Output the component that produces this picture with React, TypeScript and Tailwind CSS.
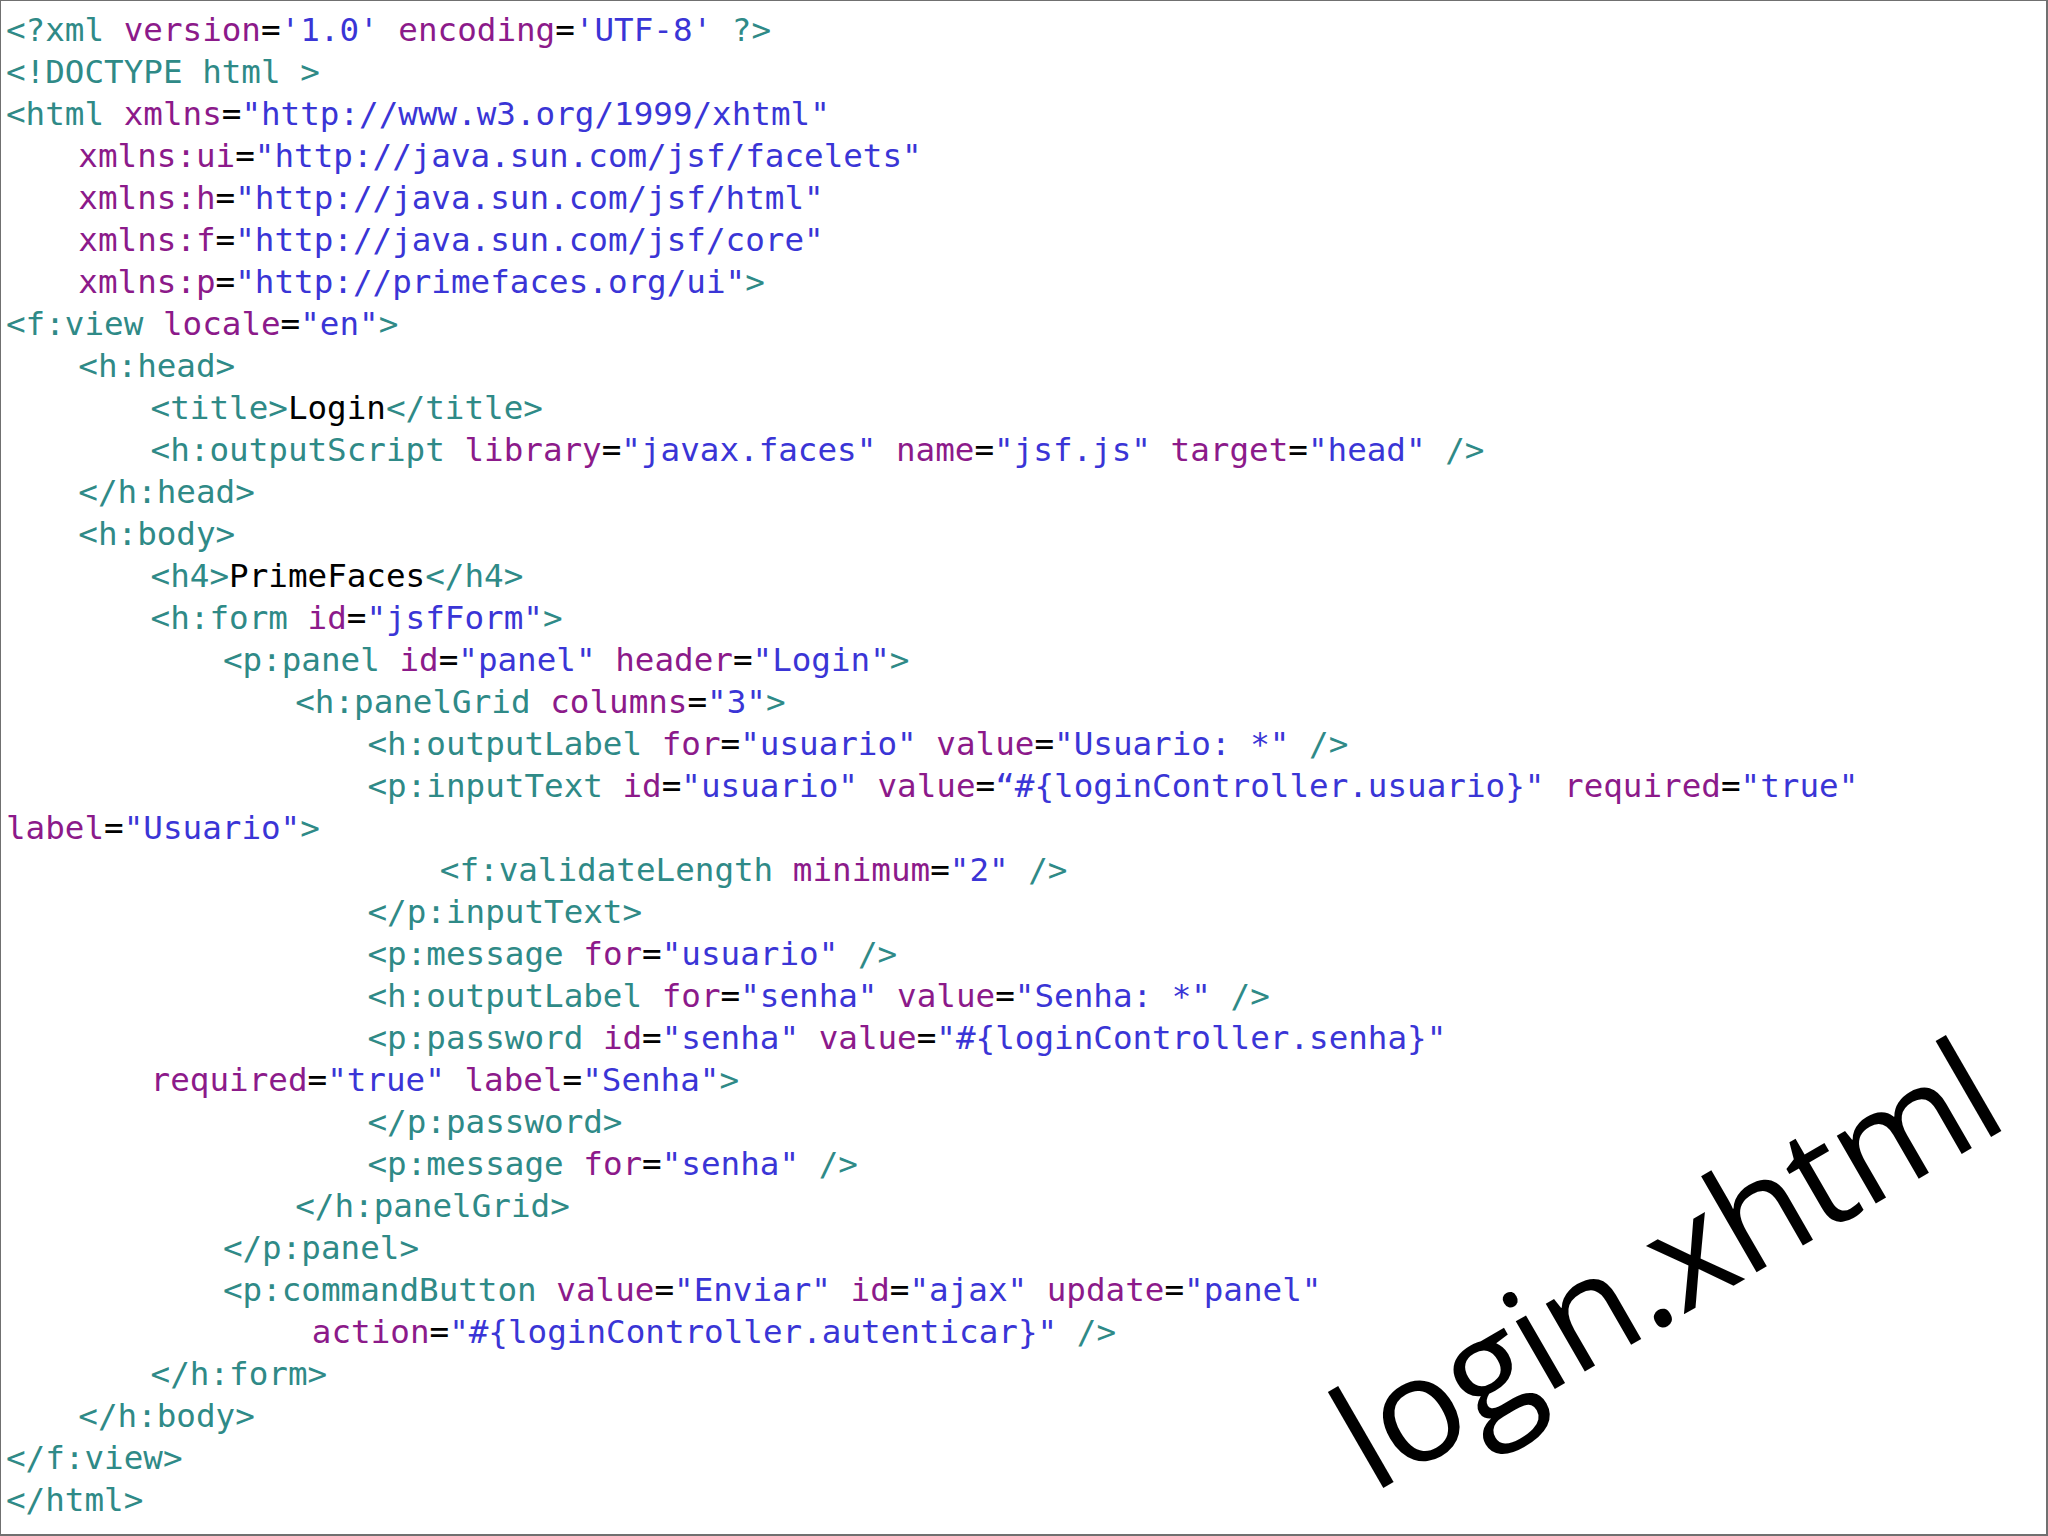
import React from "react";

type Tok = [string, string];

const C: Record<string, string> = {
  t: "text-[#2f8a87]",
  a: "text-[#8c1a8a]",
  e: "text-black",
  v: "text-[#3a35d6]",
  k: "text-black",
};

const L = (indent: number, ...toks: Tok[]) => ({ indent, toks });

const lines: { indent: number; toks: Tok[] }[] = [
  L(0, ["t", "<?xml "], ["a", "version"], ["e", "="], ["v", "'1.0'"], ["t", " "], ["a", "encoding"], ["e", "="], ["v", "'UTF-8'"], ["t", " ?>"]),
  L(0, ["t", "<!DOCTYPE html >"]),
  L(0, ["t", "<html "], ["a", "xmlns"], ["e", "="], ["v", '"http://www.w3.org/1999/xhtml"']),
  L(1, ["a", "xmlns:ui"], ["e", "="], ["v", '"http://java.sun.com/jsf/facelets"']),
  L(1, ["a", "xmlns:h"], ["e", "="], ["v", '"http://java.sun.com/jsf/html"']),
  L(1, ["a", "xmlns:f"], ["e", "="], ["v", '"http://java.sun.com/jsf/core"']),
  L(1, ["a", "xmlns:p"], ["e", "="], ["v", '"http://primefaces.org/ui"'], ["t", ">"]),
  L(0, ["t", "<f:view "], ["a", "locale"], ["e", "="], ["v", '"en"'], ["t", ">"]),
  L(1, ["t", "<h:head>"]),
  L(2, ["t", "<title>"], ["k", "Login"], ["t", "</title>"]),
  L(2, ["t", "<h:outputScript "], ["a", "library"], ["e", "="], ["v", '"javax.faces"'], ["t", " "], ["a", "name"], ["e", "="], ["v", '"jsf.js"'], ["t", " "], ["a", "target"], ["e", "="], ["v", '"head"'], ["t", " />"]),
  L(1, ["t", "</h:head>"]),
  L(1, ["t", "<h:body>"]),
  L(2, ["t", "<h4>"], ["k", "PrimeFaces"], ["t", "</h4>"]),
  L(2, ["t", "<h:form "], ["a", "id"], ["e", "="], ["v", '"jsfForm"'], ["t", ">"]),
  L(3, ["t", "<p:panel "], ["a", "id"], ["e", "="], ["v", '"panel"'], ["t", " "], ["a", "header"], ["e", "="], ["v", '"Login"'], ["t", ">"]),
  L(4, ["t", "<h:panelGrid "], ["a", "columns"], ["e", "="], ["v", '"3"'], ["t", ">"]),
  L(5, ["t", "<h:outputLabel "], ["a", "for"], ["e", "="], ["v", '"usuario"'], ["t", " "], ["a", "value"], ["e", "="], ["v", '"Usuario: *"'], ["t", " />"]),
  L(5, ["t", "<p:inputText "], ["a", "id"], ["e", "="], ["v", '"usuario"'], ["t", " "], ["a", "value"], ["e", "="], ["v", "\u201c#{loginController.usuario}\""], ["t", " "], ["a", "required"], ["e", "="], ["v", '"true"']),
  L(0, ["a", "label"], ["e", "="], ["v", '"Usuario"'], ["t", ">"]),
  L(6, ["t", "<f:validateLength "], ["a", "minimum"], ["e", "="], ["v", '"2"'], ["t", " />"]),
  L(5, ["t", "</p:inputText>"]),
  L(5, ["t", "<p:message "], ["a", "for"], ["e", "="], ["v", '"usuario"'], ["t", " />"]),
  L(5, ["t", "<h:outputLabel "], ["a", "for"], ["e", "="], ["v", '"senha"'], ["t", " "], ["a", "value"], ["e", "="], ["v", '"Senha: *"'], ["t", " />"]),
  L(5, ["t", "<p:password "], ["a", "id"], ["e", "="], ["v", '"senha"'], ["t", " "], ["a", "value"], ["e", "="], ["v", '"#{loginController.senha}"']),
  L(2, ["a", "required"], ["e", "="], ["v", '"true"'], ["t", " "], ["a", "label"], ["e", "="], ["v", '"Senha"'], ["t", ">"]),
  L(5, ["t", "</p:password>"]),
  L(5, ["t", "<p:message "], ["a", "for"], ["e", "="], ["v", '"senha"'], ["t", " />"]),
  L(4, ["t", "</h:panelGrid>"]),
  L(3, ["t", "</p:panel>"]),
  L(3, ["t", "<p:commandButton "], ["a", "value"], ["e", "="], ["v", '"Enviar"'], ["t", " "], ["a", "id"], ["e", "="], ["v", '"ajax"'], ["t", " "], ["a", "update"], ["e", "="], ["v", '"panel"']),
  L(4.23, ["a", "action"], ["e", "="], ["v", '"#{loginController.autenticar}"'], ["t", " />"]),
  L(2, ["t", "</h:form>"]),
  L(1, ["t", "</h:body>"]),
  L(0, ["t", "</f:view>"]),
  L(0, ["t", "</html>"]),
];

export default function App() {
  return (
    <div className="relative w-[2048px] h-[1536px] overflow-hidden bg-white border border-[#707070] border-r-2 border-b-2">
      <div className="flex flex-col pt-[8.4px] pl-[5px] text-[32.6px] leading-[42px] whitespace-pre font-['DejaVu_Sans_Mono',monospace]">
        {lines.map((ln, i) => (
          <div key={i} className="h-[42px]" style={{ paddingLeft: ln.indent * 72.3 }}>
            {ln.toks.map((tk, j) => (
              <span key={j} className={C[tk[0]]}>
                {tk[1]}
              </span>
            ))}
          </div>
        ))}
      </div>
      <div className="absolute left-[1372px] top-[1364px] text-[146px] leading-none tracking-[-2px] text-black whitespace-nowrap origin-[0_130px] -rotate-30 font-['Open_Sans',sans-serif]">
        login.xhtml
      </div>
    </div>
  );
}
